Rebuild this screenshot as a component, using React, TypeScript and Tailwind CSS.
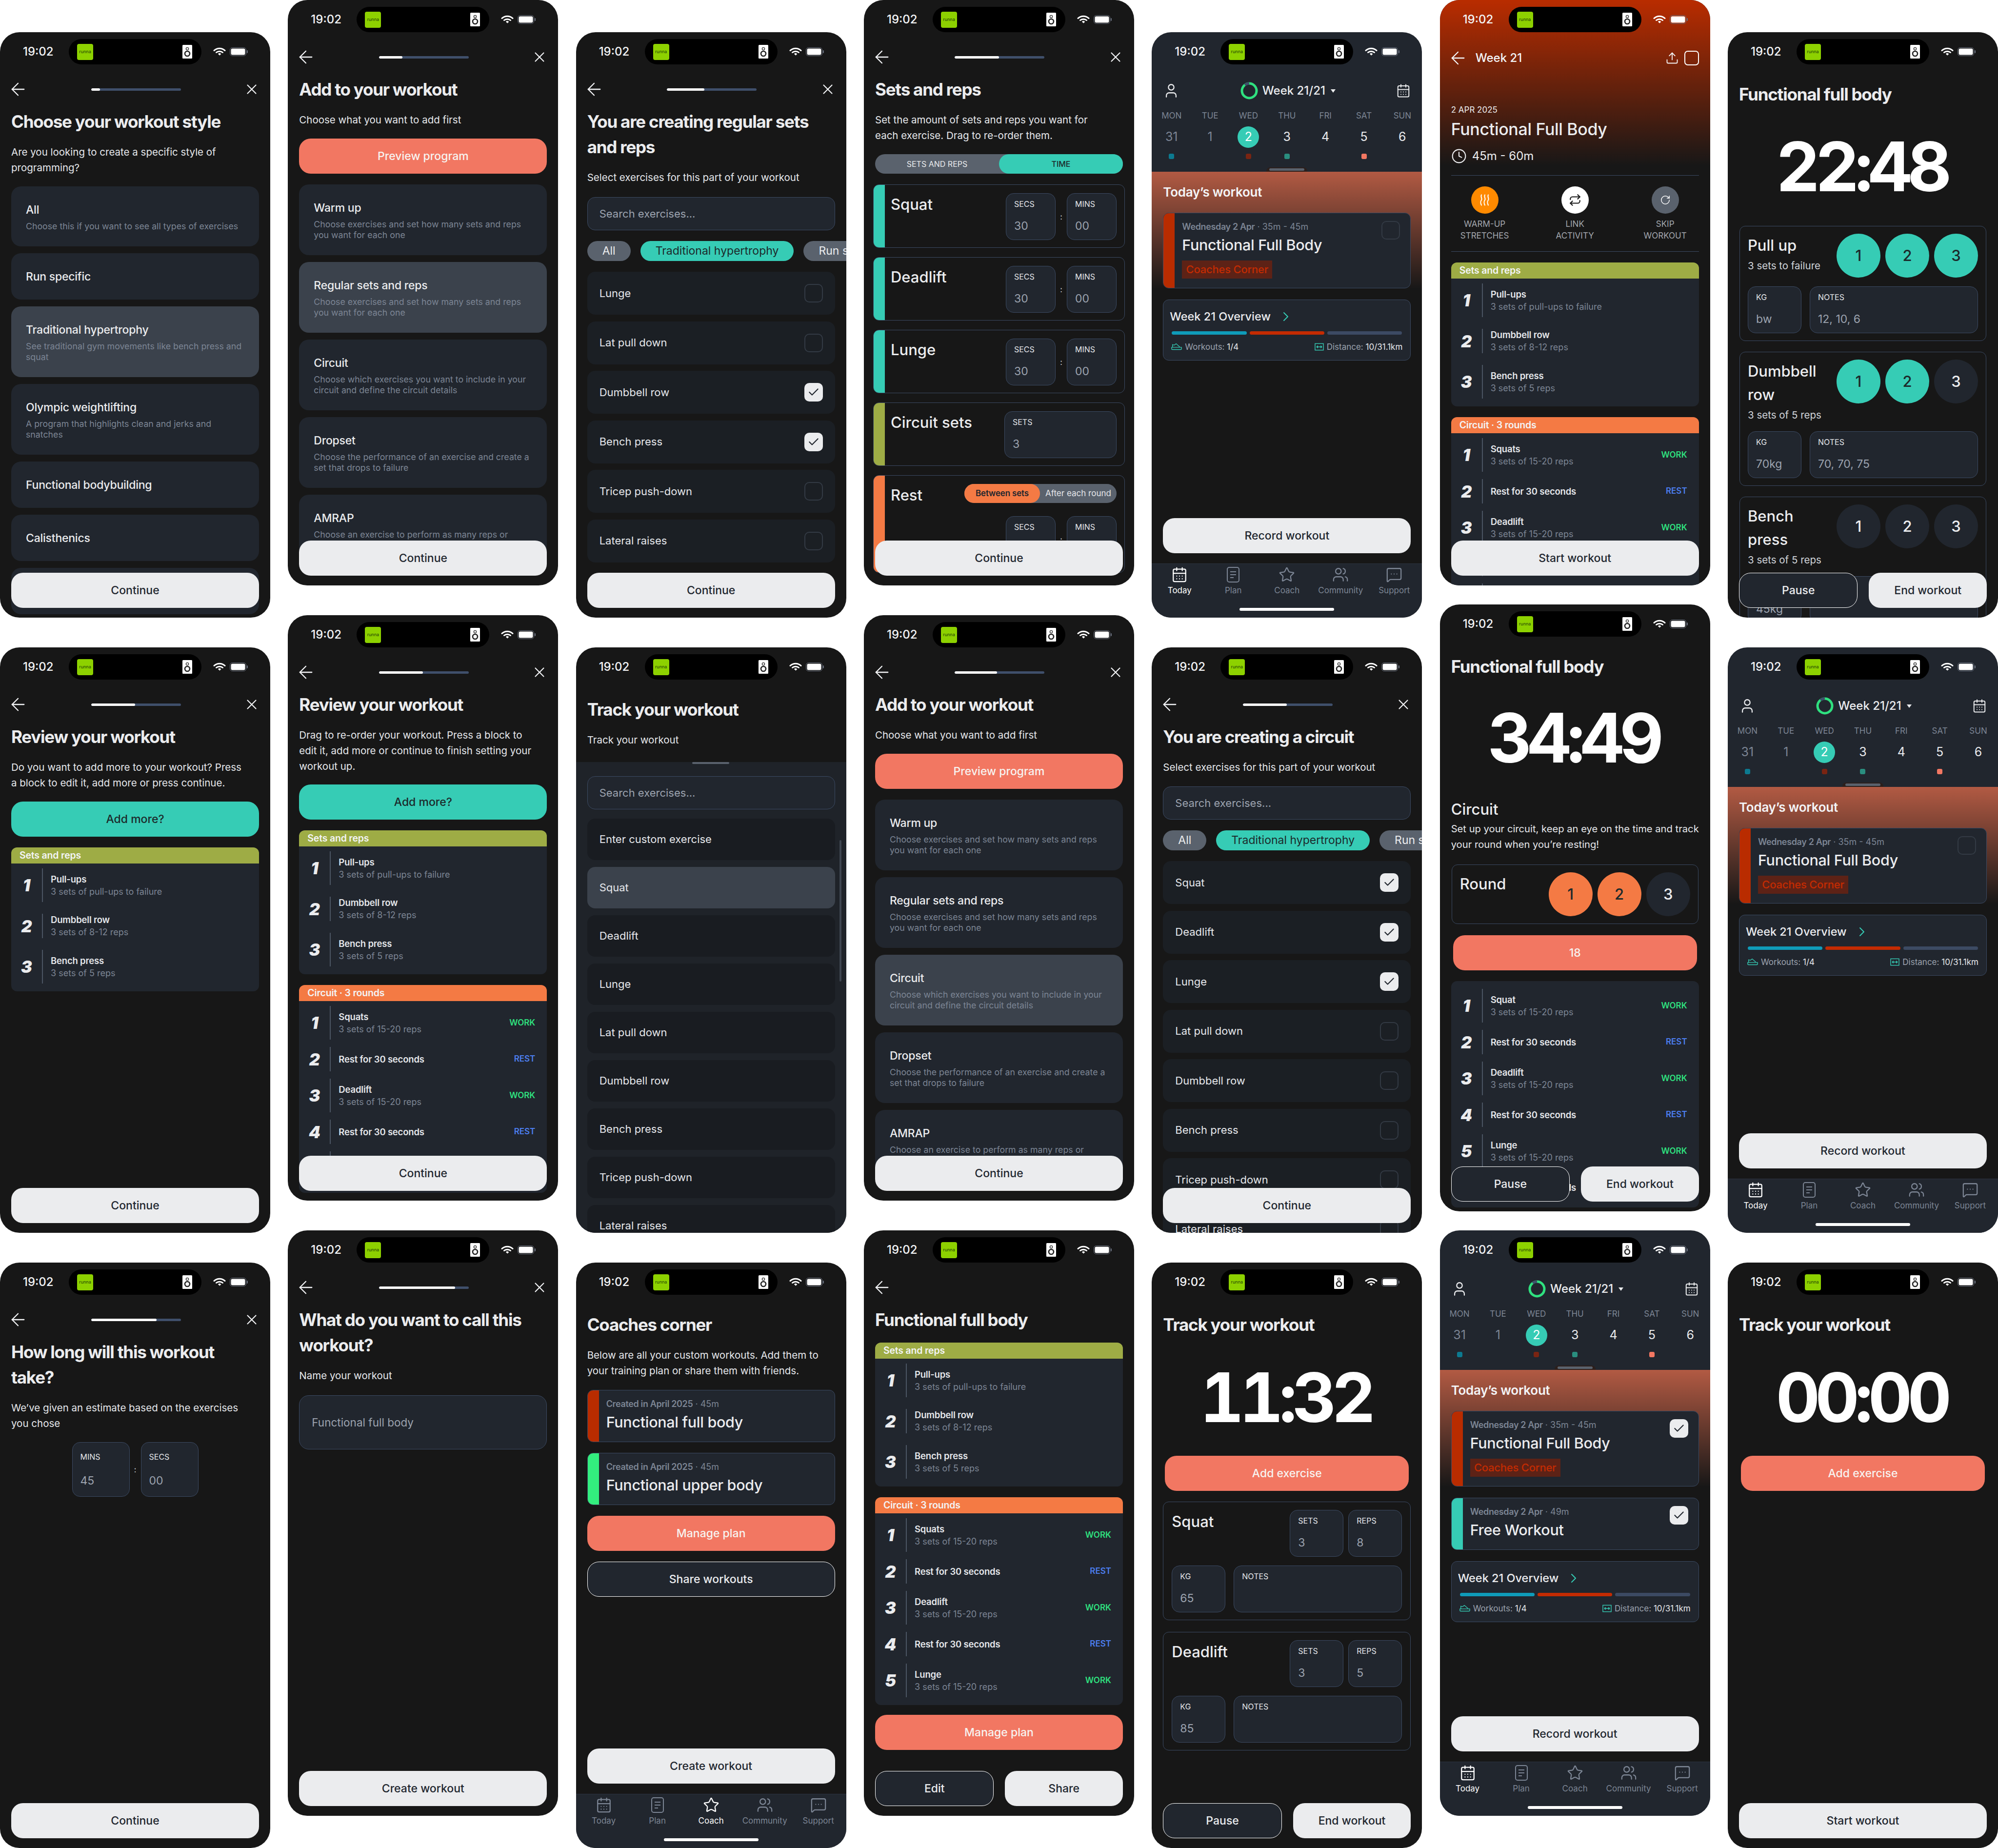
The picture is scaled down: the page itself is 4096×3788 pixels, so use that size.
import type { ReactNode } from "react";
import {
  ArrowLeft,
  Check,
  ChevronRight,
  Clock,
  MessageSquareMore,
  Repeat,
  RotateCw,
  Star,
  Upload,
  User,
  Users,
  X,
  CalendarDays,
} from "lucide-react";

const Phone = ({ dark, tall, children }: { dark?: boolean; tall?: boolean; children: ReactNode }) => (
  <div
    className={`relative flex w-[554px] flex-col overflow-hidden rounded-[40px] font-['Inter',sans-serif] ${
      tall ? "h-[1244px]" : "h-[1200px]"
    } ${dark ? "bg-[#21262e]" : "bg-[#171717]"}`}
  >
    {children}
  </div>
);

const WifiGlyph = () => (
  <svg viewBox="0 0 26 20" className="h-[20px] w-[26px]" fill="none" stroke="white" strokeWidth="3" strokeLinecap="round">
    <path d="M2 7.5C8 1.8 18 1.8 24 7.5" />
    <path d="M6.5 11.5C10 8.4 16 8.4 19.5 11.5" />
    <path d="M13 17l-2.6-2.6a3.8 3.8 0 0 1 5.2 0z" fill="white" strokeWidth="1" />
  </svg>
);

const BatteryGlyph = () => (
  <svg viewBox="0 0 38 18" className="h-[18px] w-[38px]">
    <rect x="0.5" y="0.5" width="33" height="17" rx="5" fill="none" stroke="#6b7280" />
    <rect x="2.5" y="2.5" width="29" height="13" rx="3" fill="white" />
    <rect x="35" y="6" width="2" height="6" rx="1" fill="#6b7280" />
  </svg>
);

const SpeakerGlyph = () => (
  <svg viewBox="0 0 20 28" className="h-[28px] w-[20px]">
    <rect width="20" height="28" rx="1.5" fill="white" />
    <circle cx="10" cy="8" r="2.6" fill="none" stroke="#333" strokeWidth="1.4" />
    <circle cx="10" cy="18" r="5" fill="none" stroke="#222" strokeWidth="2.6" />
  </svg>
);

const StatusBar = () => (
  <div className="mt-[14px] flex h-[52px] shrink-0 items-center">
    <div className="w-[141px] pl-[47px] text-[24px] font-medium text-[#f3f4f6]">19:02</div>
    <div className="flex h-[52px] w-[272px] items-center justify-between rounded-full bg-black pl-[17px] pr-[19px]">
      <div className="flex h-[33px] w-[33px] items-center justify-center rounded-[4px] bg-[#8dd100] text-[9px] text-[#1c3b05]">
        runna
      </div>
      <SpeakerGlyph />
    </div>
    <div className="ml-[24px] flex items-center gap-[8px]">
      <WifiGlyph />
      <BatteryGlyph />
    </div>
  </div>
);

const Nav = ({ progress }: { progress?: number }) => (
  <div className="mt-[37px] flex h-[28px] shrink-0 items-center justify-between pl-[16px] pr-[21px] text-[#f3f4f6]">
    <ArrowLeft size={42} strokeWidth={1.3} />
    {progress !== undefined && (
      <>
        <div className="h-[5px] w-[184px] overflow-hidden rounded-full bg-[#3f4f6b]">
          <div className="h-full rounded-full bg-white" style={{ width: `${progress}%` }} />
        </div>
        <X size={34} strokeWidth={1.5} />
      </>
    )}
  </div>
);

const Title = ({ children, className = "" }: { children: ReactNode; className?: string }) => (
  <h1 className={`px-[23px] text-[35px] leading-[52px] font-bold tracking-[-0.035em] text-[#ebecee] ${className}`}>
    {children}
  </h1>
);

const Sub = ({ children, className = "" }: { children: ReactNode; className?: string }) => (
  <p className={`mt-[21px] px-[23px] text-[20.5px] leading-[32px] whitespace-nowrap text-[#e5e7eb] ${className}`}>{children}</p>
);

const tones = {
  light: "bg-[#ebecee] text-[#21262e]",
  coral: "bg-[#f27762] text-[#f7f3f0]",
  teal: "bg-[#36ccb5] text-[#1c2a2b]",
  outline: "bg-[#21262e] border border-white text-[#ebecee]",
};

const Btn = ({
  tone = "light",
  className = "",
  children,
}: {
  tone?: keyof typeof tones;
  className?: string;
  children: ReactNode;
}) => (
  <div className={`flex h-[72px] items-center justify-center rounded-[24px] text-[23px] font-medium ${tones[tone]} ${className}`}>
    {children}
  </div>
);

const Foot = ({ children }: { children: ReactNode }) => (
  <div className="absolute inset-x-[23px] bottom-[20px] flex gap-[23px]">{children}</div>
);

const OptionCard = ({ title, desc, active }: { title?: string; desc?: string; active?: boolean }) => (
  <div
    className={`shrink-0 rounded-[20px] px-[30px] ${active ? "bg-[#3b424c]" : "bg-[#21262e]"} ${
      desc ? (desc.length > 53 ? "h-[145px] pt-[33px]" : "h-[123px] pt-[33px]") : "flex h-[95px] items-center"
    }`}
  >
    <div className="text-[23px] leading-[30px] font-medium tracking-[-0.01em] text-[#ebecee]">{title}</div>
    {desc && <div className="mt-[8px] text-[17.75px] leading-[22px] text-[#7c8594]">{desc}</div>}
  </div>
);

const addOptions = [
  { title: "Warm up", desc: "Choose exercises and set how many sets and reps you want for each one" },
  { title: "Regular sets and reps", desc: "Choose exercises and set how many sets and reps you want for each one" },
  { title: "Circuit", desc: "Choose which exercises you want to include in your circuit and define the circuit details" },
  { title: "Dropset", desc: "Choose the performance of an exercise and create a set that drops to failure" },
  { title: "AMRAP", desc: "Choose an exercise to perform as many reps or rounds as possible" },
];

const AddScreen = ({ active, progress }: { active: string; progress: number }) => (
  <Phone>
    <StatusBar />
    <Nav progress={progress} />
    <Title className="mt-[26px]">Add to your workout</Title>
    <Sub>Choose what you want to add first</Sub>
    <div className="mt-[22px] flex flex-col gap-[14px] px-[23px]">
      <Btn tone="coral" className="mb-[8px]">Preview program</Btn>
      {addOptions.map((o) => (
        <OptionCard key={o.title} {...o} active={o.title === active} />
      ))}
    </div>
    <Foot>
      <Btn className="flex-1">Continue</Btn>
    </Foot>
  </Phone>
);

const CheckBox = ({ on }: { on?: boolean }) =>
  on ? (
    <div className="flex h-[38px] w-[38px] items-center justify-center rounded-[10px] bg-[#ebecee] text-[#21262e]">
      <Check size={26} strokeWidth={2} />
    </div>
  ) : (
    <div className="h-[38px] w-[38px] rounded-[10px] border-[2px] border-[#333a44]" />
  );

const SearchBox = ({ className = "" }: { className?: string }) => (
  <div className={`mx-[23px] flex h-[68px] shrink-0 items-center rounded-[16px] border border-[#3b4a63] bg-[#21262e] px-[24px] text-[22px] text-[#9ca3af] ${className}`}>
    Search exercises...
  </div>
);

const Chips = () => (
  <div className="mt-[22px] flex h-[41px] shrink-0 gap-[20px] pl-[23px] text-[23px] whitespace-nowrap">
    <div className="flex items-center rounded-full bg-[#5a626d] px-[31px] text-[#ebecee]">All</div>
    <div className="flex items-center rounded-full bg-[#36ccb5] px-[31px] text-[#1c2a2b]">Traditional hypertrophy</div>
    <div className="flex items-center rounded-full bg-[#5a626d] px-[31px] text-[#ebecee]">Run specific</div>
  </div>
);

const PickList = ({ items }: { items: [string, boolean][] }) => (
  <div className="mt-[22px] flex flex-col gap-[13.5px] px-[23px]">
    {items.map(([name, on]) => (
      <div key={name} className="flex h-[88px] shrink-0 items-center justify-between rounded-[16px] bg-[#1b1f24] pl-[25px] pr-[25px] text-[22px] text-[#e5e7eb]">
        {name}
        <CheckBox on={on} />
      </div>
    ))}
  </div>
);

const Field = ({ label, value, big, className = "" }: { label: string; value?: string; big?: boolean; className?: string }) => (
  <div className={`shrink-0 rounded-[16px] border border-[#3b4a63] bg-[#21262e] px-[16px] ${big ? "h-[112px] pt-[19px]" : "h-[96px] pt-[11px]"} ${className}`}>
    <div className="text-[16px] leading-[20px] text-[#e5e7eb]">{label}</div>
    <div className={`text-[23px] leading-[30px] text-[#9ca3af] ${big ? "mt-[24px]" : "mt-[20px]"}`}>{value}</div>
  </div>
);

const Colon = () => <div className="flex w-[23px] items-center justify-center text-[16px] text-[#d1d5db]">:</div>;

const TimeRow = ({ name, bar, children, h = "h-[130px]" }: { name: string; bar: string; children: ReactNode; h?: string }) => (
  <div className={`flex shrink-0 overflow-hidden rounded-[12px] border border-[#3b4a63] ${h}`}>
    <div className={`w-[23px] shrink-0 ${bar}`} />
    <div className="flex flex-1 pl-[12px] pr-[16px] pt-[17px]">
      <div className="flex-1 text-[31px] leading-[46px] font-medium text-[#ebecee]">{name}</div>
      <div className="flex flex-col items-end">{children}</div>
    </div>
  </div>
);

const SecsMins = () => (
  <div className="flex">
    <Field label="SECS" value="30" className="w-[102px]" />
    <Colon />
    <Field label="MINS" value="00" className="w-[102px]" />
  </div>
);

type Row = { n: number; title: string; sub?: string; tag?: "WORK" | "REST"; short?: boolean };

const setRows: Row[] = [
  { n: 1, title: "Pull-ups", sub: "3 sets of pull-ups to failure" },
  { n: 2, title: "Dumbbell row", sub: "3 sets of 8-12 reps", short: true },
  { n: 3, title: "Bench press", sub: "3 sets of 5 reps" },
];

const circuitRows: Row[] = [
  { n: 1, title: "Squats", sub: "3 sets of 15-20 reps", tag: "WORK" },
  { n: 2, title: "Rest for 30 seconds", tag: "REST", short: true },
  { n: 3, title: "Deadlift", sub: "3 sets of 15-20 reps", tag: "WORK" },
  { n: 4, title: "Rest for 30 seconds", tag: "REST", short: true },
  { n: 5, title: "Lunge", sub: "3 sets of 15-20 reps", tag: "WORK" },
];

const BlockRow = ({ n, title, sub, tag, short }: Row) => (
  <div className={`flex shrink-0 items-center ${short ? "h-[50px]" : "h-[69px]"}`}>
    <div className="w-[63px] text-center text-[34px] font-black italic text-[#ebecee]">{n}</div>
    <div className="h-full w-[2px] bg-[#4b5563]" />
    <div className="ml-[16px] flex-1">
      <div className="text-[18.5px] leading-[26px] font-semibold tracking-[-0.01em] text-[#e5e7eb] whitespace-nowrap">{title}</div>
      {sub && <div className="text-[18px] leading-[26px] text-[#7c8594] whitespace-nowrap">{sub}</div>}
    </div>
    {tag && (
      <div className={`mr-[24px] text-[17px] font-semibold ${tag === "WORK" ? "text-[#2fe07f]" : "text-[#4c7ef0]"}`}>{tag}</div>
    )}
  </div>
);

const Block = ({
  label,
  head,
  rows,
  gap,
  className = "",
}: {
  label?: string;
  head?: string;
  rows: Row[];
  gap: string;
  className?: string;
}) => (
  <div className={`mx-[23px] shrink-0 overflow-hidden rounded-[12px] bg-[#21262e] ${className}`}>
    {label && <div className={`flex h-[33px] items-center px-[17px] text-[19.5px] font-semibold tracking-[-0.01em] text-[#f3f4f6] ${head}`}>{label}</div>}
    <div className={`flex flex-col pb-[16px] ${label ? "pt-[10px]" : "pt-[16px]"} ${gap}`}>
      {rows.map((r) => (
        <BlockRow key={r.n} {...r} />
      ))}
    </div>
  </div>
);

const SetsBlock = ({ className }: { className?: string }) => (
  <Block label="Sets and reps" head="bg-[#9eac45]" rows={setRows} gap="gap-[24px]" className={className} />
);

const CircuitBlock = ({ rows = circuitRows, className }: { rows?: Row[]; className?: string }) => (
  <Block label="Circuit · 3 rounds" head="bg-[#f47a44]" rows={rows} gap="gap-[15px]" className={className} />
);

const Timer = ({ children, className = "" }: { children: ReactNode; className?: string }) => (
  <div className={`pr-[6px] text-center text-[140px] leading-[140px] font-bold tracking-[-0.07em] tabular-nums text-white ${className}`}>{children}</div>
);

const Bubble = ({ n, tone = "bg-[#21262e] text-[#ebecee]" }: { n: number; tone?: string }) => (
  <div className={`flex h-[90px] w-[90px] items-center justify-center rounded-full text-[31px] font-medium ${tone}`}>{n}</div>
);

const Bubbles = ({ done, on }: { done: number; on: string }) => (
  <div className="flex shrink-0 gap-[10px]">
    {[1, 2, 3].map((n) => (
      <Bubble key={n} n={n} tone={n <= done ? on : undefined} />
    ))}
  </div>
);

const TrackCard = ({
  name,
  sub,
  done,
  kg,
  notes,
}: {
  name: string;
  sub: string;
  done: number;
  kg: string;
  notes?: string;
}) => (
  <div className="mx-[24px] mb-[22px] shrink-0 rounded-[12px] border border-[#3b4a63] px-[16px] pb-[15px] pt-[15px]">
    <div className="flex">
      <div className="flex-1">
        <div className="text-[31px] leading-[48px] font-medium text-[#ebecee]">{name}</div>
        <div className="mt-[3px] text-[20.5px] leading-[30px] text-[#d1d5db]">{sub}</div>
      </div>
      <Bubbles done={done} on="bg-[#36ccb5] text-[#1c2a2b]" />
    </div>
    <div className="mt-[18px] flex gap-[17px]">
      <Field label="KG" value={kg} className="w-[110px]" />
      <Field label="NOTES" value={notes} className="flex-1" />
    </div>
  </div>
);

const Tabs = ({ active }: { active: string }) => {
  const items: [string, ReactNode][] = [
    ["Today", <CalendarDays size={34} strokeWidth={1.6} />],
    [
      "Plan",
      <svg viewBox="0 0 28 34" className="h-[34px] w-[28px]" fill="none" stroke="currentColor" strokeWidth="2">
        <rect x="2" y="2" width="24" height="30" rx="4" />
        <path d="M8 11h12M8 17h12M8 23h7" />
      </svg>,
    ],
    ["Coach", <Star size={34} strokeWidth={1.6} />],
    ["Community", <Users size={34} strokeWidth={1.6} />],
    ["Support", <MessageSquareMore size={34} strokeWidth={1.6} />],
  ];
  return (
    <div className="relative h-[111px] shrink-0 border-t border-[#2b3340] bg-[#21262e]">
      <div className="grid grid-cols-5 px-[2px] pt-[5px]">
        {items.map(([label, icon]) => (
          <div key={label} className={`flex flex-col items-center gap-[3px] ${label === active ? "text-white" : "text-[#7c8594]"}`}>
            {icon}
            <div className="text-[17px] leading-[24px]">{label}</div>
          </div>
        ))}
      </div>
      <div className="absolute bottom-[14px] left-[180px] h-[6px] w-[194px] rounded-full bg-white" />
    </div>
  );
};

const days: [string, string, string][] = [
  ["MON", "31", "bg-[#0c7a90]"],
  ["TUE", "1", ""],
  ["WED", "2", "bg-[#7a2412]"],
  ["THU", "3", "bg-[#2a8e7f]"],
  ["FRI", "4", ""],
  ["SAT", "5", "bg-[#f27762]"],
  ["SUN", "6", ""],
];

const WeekHead = () => (
  <div className="relative h-[220px] shrink-0 bg-[#21262e] pt-[37px]">
    <div className="flex h-[34px] items-center justify-between px-[23px] text-[#ebecee]">
      <User size={34} strokeWidth={1.6} />
      <div className="flex items-center gap-[9px]">
        <svg viewBox="0 0 36 36" className="h-[36px] w-[36px]" fill="none" strokeWidth="5">
          <circle cx="18" cy="18" r="15" stroke="#2fe07f" />
          <path d="M9 6A15 15 0 0 1 18 3" stroke="#3f4f6b" />
        </svg>
        <span className="text-[24px] font-medium">Week 21/21</span>
        <span className="ml-[2px] h-0 w-0 border-x-[5px] border-t-[7px] border-x-transparent border-t-[#ebecee]" />
      </div>
      <CalendarDays size={30} strokeWidth={1.6} />
    </div>
    <div className="mt-[23px] grid grid-cols-7 px-[1px]">
      {days.map(([d, n, dot], i) => (
        <div key={d} className="flex flex-col items-center">
          <div className="text-[17px] leading-[22px] text-[#7c8594]">{d}</div>
          <div
            className={`mt-[11px] flex h-[44px] w-[44px] items-center justify-center rounded-full text-[25px] ${
              i === 2 ? "bg-[#36ccb5] text-white" : i < 2 ? "text-[#7c8594]" : "text-[#ebecee]"
            }`}
          >
            {n}
          </div>
          <div className={`mt-[12px] h-[11px] w-[11px] rounded-[3px] ${dot}`} />
        </div>
      ))}
    </div>
    <div className="absolute bottom-0 left-[235px] flex h-[9px] w-[84px] items-start justify-center rounded-t-[8px] bg-[#2c1f1c] pt-[2px]">
      <div className="h-[5px] w-[72px] rounded-full bg-[#5a626d]" />
    </div>
  </div>
);

const WorkoutCard = ({
  meta,
  metaEnd,
  name,
  bar,
  tag,
  done,
  check,
}: {
  meta: string;
  metaEnd: string;
  name: string;
  bar: string;
  tag?: boolean;
  done?: boolean;
  check?: boolean;
}) => (
  <div className={`flex shrink-0 overflow-hidden rounded-[12px] border border-[#3b4a63] bg-[#21262e] ${tag ? "h-[155px]" : "h-[107px]"}`}>
    <div className={`w-[23px] shrink-0 ${bar}`} />
    <div className="flex-1 pl-[15px] pt-[14px]">
      <div className="text-[18px] leading-[28px] text-[#7c8594]">
        <span className="font-semibold tracking-[-0.02em]">{meta}</span> · {metaEnd}
      </div>
      <div className="mt-[4px] text-[30.5px] leading-[38px] font-medium tracking-[-0.01em] text-[#ebecee]">{name}</div>
      {tag && (
        <div className="mt-[13px] flex h-[37px] w-[185px] items-center justify-center bg-[#5d2216] text-[22px] font-medium tracking-[-0.01em] whitespace-nowrap text-[#c42b02]">
          Coaches Corner
        </div>
      )}
    </div>
    {check && (
      <div className="pr-[21px] pt-[16px]">
        <CheckBox on={done} />
      </div>
    )}
  </div>
);

const Overview = () => (
  <div className="h-[125px] shrink-0 rounded-[12px] border border-[#3b4a63] bg-[#21262e] px-[13px] pt-[17px]">
    <div className="flex h-[34px] items-center text-[23.5px] font-medium text-[#ebecee]">
      Week 21 Overview
      <ChevronRight size={32} strokeWidth={1.5} className="ml-[15px] text-[#36ccb5]" />
    </div>
    <div className="mt-[13px] flex gap-[6px] px-[4px]">
      <div className="h-[7px] flex-1 rounded-full bg-[#0f9bb9]" />
      <div className="h-[7px] flex-1 rounded-full bg-[#c42b02]" />
      <div className="h-[7px] flex-1 rounded-full bg-[#3c4a63]" />
    </div>
    <div className="mt-[13px] flex justify-between px-[3px] text-[17px] leading-[24px] text-[#9ca3af]">
      <div className="flex items-center gap-[6px]">
        <svg viewBox="0 0 24 16" className="h-[16px] w-[22px]" fill="none" stroke="#36ccb5" strokeWidth="1.5">
          <path d="M1 9h22v3a2 2 0 0 1-2 2H3a2 2 0 0 1-2-2zM3 9V3l4 1 4-3 8 7" />
        </svg>
        <span>
          Workouts: <span className="text-[#e5e7eb]">1/4</span>
        </span>
      </div>
      <div className="flex items-center gap-[6px]">
        <svg viewBox="0 0 20 16" className="h-[16px] w-[19px]" fill="none" stroke="#36ccb5" strokeWidth="1.5">
          <rect x="1" y="1" width="18" height="14" />
          <path d="M5 8h10M7 5.5 4.5 8 7 10.5M13 5.5 15.5 8 13 10.5" />
        </svg>
        <span>
          Distance: <span className="text-[#e5e7eb]">10/31.1km</span>
        </span>
      </div>
    </div>
  </div>
);

const TodayScreen = ({ two }: { two?: boolean }) => (
  <Phone dark>
    <div className="h-[66px] shrink-0">
      <StatusBar />
    </div>
    <WeekHead />
    <div className="flex flex-1 flex-col bg-[linear-gradient(180deg,#b25a43_0,#171717_240px)] px-[23px]">
      <div className="mt-[24px] text-[26px] leading-[36px] font-semibold tracking-[-0.01em] text-[#f3f4f6]">Today’s workout</div>
      <div className="mt-[24px] flex flex-1 flex-col gap-[23px]">
        <WorkoutCard meta="Wednesday 2 Apr" metaEnd="35m - 45m" name="Functional Full Body" bar="bg-[#b92c00]" tag check done={two} />
        {two && <WorkoutCard meta="Wednesday 2 Apr" metaEnd="49m" name="Free Workout" bar="bg-[#36ccb5]" check done />}
        <Overview />
      </div>
      <Btn className="mb-[21px]">Record workout</Btn>
    </div>
    <Tabs active="Today" />
  </Phone>
);

const regularPicks: [string, boolean][] = [
  ["Lunge", false],
  ["Lat pull down", false],
  ["Dumbbell row", true],
  ["Bench press", true],
  ["Tricep push-down", false],
  ["Lateral raises", false],
];

const circuitPicks: [string, boolean][] = [
  ["Squat", true],
  ["Deadlift", true],
  ["Lunge", true],
  ["Lat pull down", false],
  ["Dumbbell row", false],
  ["Bench press", false],
  ["Tricep push-down", false],
  ["Lateral raises", false],
];

const trackItems = [
  "Enter custom exercise",
  "Squat",
  "Deadlift",
  "Lunge",
  "Lat pull down",
  "Dumbbell row",
  "Bench press",
  "Tricep push-down",
  "Lateral raises",
];

const SessionCard = ({ name, reps, kg }: { name: string; reps: string; kg: string }) => (
  <div className="mx-[23px] mb-[24px] h-[243px] shrink-0 rounded-[12px] border border-[#3b4a63] px-[17px] pt-[16px]">
    <div className="flex">
      <div className="flex-1 text-[31px] leading-[48px] font-medium text-[#ebecee]">{name}</div>
      <div className="flex gap-[10px]">
        <Field label="SETS" value="3" className="w-[110px]" />
        <Field label="REPS" value={reps} className="w-[110px]" />
      </div>
    </div>
    <div className="mt-[18px] flex gap-[17px]">
      <Field label="KG" value={kg} className="w-[110px]" />
      <Field label="NOTES" className="flex-1" />
    </div>
  </div>
);

const QuickAction = ({ tone, icon, label, sub }: { tone: string; icon: ReactNode; label: string; sub: string }) => (
  <div className="flex w-[138px] flex-col items-center">
    <div className={`mb-[9px] flex h-[56px] w-[56px] items-center justify-center rounded-full ${tone}`}>{icon}</div>
    {label}
    <br />
    {sub}
  </div>
);

const Column = ({ offset, gap = "gap-[61px]", children }: { offset?: boolean; gap?: string; children: ReactNode }) => (
  <div className={`flex flex-col ${gap} ${offset ? "pt-[66px]" : ""}`}>{children}</div>
);

export default function App() {
  return (
    <div className="flex h-[3788px] w-[4096px] justify-between bg-white">
      <Column offset>
        <Phone>
          <StatusBar />
          <Nav progress={10} />
          <Title className="mt-[26px]">Choose your workout style</Title>
          <Sub>
            Are you looking to create a specific style of
            <br />
            programming?
          </Sub>
          <div className="mt-[22px] flex flex-col gap-[14px] px-[23px]">
            <OptionCard title="All" desc="Choose this if you want to see all types of exercises" />
            <OptionCard title="Run specific" />
            <OptionCard title="Traditional hypertrophy" desc="See traditional gym movements like bench press and squat" active />
            <OptionCard title="Olympic weightlifting" desc="A program that highlights clean and jerks and snatches" />
            <OptionCard title="Functional bodybuilding" />
            <OptionCard title="Calisthenics" />
            <OptionCard />
          </div>
          <Foot>
            <Btn className="flex-1">Continue</Btn>
          </Foot>
        </Phone>
        <Phone>
          <StatusBar />
          <Nav progress={49} />
          <Title className="mt-[26px]">Review your workout</Title>
          <Sub>
            Do you want to add more to your workout? Press
            <br />a block to edit it, add more or press continue.
          </Sub>
          <div className="mx-[23px] mt-[22px]">
            <Btn tone="teal">Add more?</Btn>
          </div>
          <SetsBlock className="mt-[22px]" />
          <Foot>
            <Btn className="flex-1">Continue</Btn>
          </Foot>
        </Phone>
        <Phone>
          <StatusBar />
          <Nav progress={73} />
          <Title className="mt-[26px]">
            How long will this workout
            <br />
            take?
          </Title>
          <Sub>
            We’ve given an estimate based on the exercises
            <br />
            you chose
          </Sub>
          <div className="mt-[22px] flex justify-center">
            <Field label="MINS" value="45" big className="w-[118px]" />
            <Colon />
            <Field label="SECS" value="00" big className="w-[118px]" />
          </div>
          <Foot>
            <Btn className="flex-1">Continue</Btn>
          </Foot>
        </Phone>
      </Column>

      <Column>
        <AddScreen active="Regular sets and reps" progress={26} />
        <Phone>
          <StatusBar />
          <Nav progress={49} />
          <Title className="mt-[26px]">Review your workout</Title>
          <Sub>
            Drag to re-order your workout. Press a block to
            <br />
            edit it, add more or continue to finish setting your
            <br />
            workout up.
          </Sub>
          <div className="mx-[23px] mt-[21px]">
            <Btn tone="teal">Add more?</Btn>
          </div>
          <SetsBlock className="mt-[22px]" />
          <CircuitBlock className="mt-[22px]" />
          <Foot>
            <Btn className="flex-1">Continue</Btn>
          </Foot>
        </Phone>
        <Phone>
          <StatusBar />
          <Nav progress={85} />
          <Title className="mt-[26px]">
            What do you want to call this
            <br />
            workout?
          </Title>
          <Sub>Name your workout</Sub>
          <div className="mx-[23px] mt-[24px] flex h-[111px] items-center rounded-[20px] border border-[#3b4a63] bg-[#21262e] px-[25px] text-[22.5px] text-[#9ca3af]">
            Functional full body
          </div>
          <Foot>
            <Btn className="flex-1">Create workout</Btn>
          </Foot>
        </Phone>
      </Column>

      <Column offset>
        <Phone>
          <StatusBar />
          <Nav progress={42} />
          <Title className="mt-[26px]">
            You are creating regular sets
            <br />
            and reps
          </Title>
          <Sub>Select exercises for this part of your workout</Sub>
          <SearchBox className="mt-[24px]" />
          <Chips />
          <PickList items={regularPicks} />
          <Foot>
            <Btn className="flex-1">Continue</Btn>
          </Foot>
        </Phone>
        <Phone>
          <StatusBar />
          <Title className="mt-[35px]">Track your workout</Title>
          <Sub>Track your workout</Sub>
          <div className="relative mt-[29px] flex flex-1 flex-col bg-[#1f2329] pt-[29px]">
            <div className="absolute left-[238px] top-0 h-[4px] w-[76px] rounded-full bg-[#5a626d]" />
            <SearchBox />
            <div className="mt-[19px] flex flex-col gap-[14px] px-[23px]">
              {trackItems.map((t) => (
                <div
                  key={t}
                  className={`flex h-[85px] shrink-0 items-center rounded-[16px] px-[25px] text-[22px] text-[#e5e7eb] ${
                    t === "Squat" ? "bg-[#3b424c]" : "bg-[#191c21]"
                  }`}
                >
                  {t}
                </div>
              ))}
            </div>
            <div className="absolute right-[10px] top-[160px] h-[290px] w-[4px] rounded-full bg-[#3f4650]" />
          </div>
        </Phone>
        <Phone>
          <StatusBar />
          <Title className="mt-[35px]">Coaches corner</Title>
          <Sub>
            Below are all your custom workouts. Add them to
            <br />
            your training plan or share them with friends.
          </Sub>
          <div className="mt-[23px] flex flex-1 flex-col gap-[22px] px-[23px]">
            <WorkoutCard meta="Created in April 2025" metaEnd="45m" name="Functional full body" bar="bg-[#b92c00]" />
            <WorkoutCard meta="Created in April 2025" metaEnd="45m" name="Functional upper body" bar="bg-[#33ee7e]" />
            <Btn tone="coral">Manage plan</Btn>
            <Btn tone="outline">Share workouts</Btn>
            <Btn className="mb-[21px] mt-auto">Create workout</Btn>
          </div>
          <Tabs active="Coach" />
        </Phone>
      </Column>

      <Column>
        <Phone>
          <StatusBar />
          <Nav progress={49} />
          <Title className="mt-[26px]">Sets and reps</Title>
          <Sub>
            Set the amount of sets and reps you want for
            <br />
            each exercise. Drag to re-order them.
          </Sub>
          <div className="mx-[23px] mt-[22px] flex h-[40px] shrink-0 rounded-full bg-[#5a626d] text-[16px] uppercase">
            <div className="flex flex-1 items-center justify-center text-[#ebecee]">Sets and reps</div>
            <div className="flex flex-1 items-center justify-center rounded-full bg-[#36ccb5] font-medium text-[#1c2a2b]">Time</div>
          </div>
          <div className="mt-[22px] flex flex-col gap-[19px] px-[19px]">
            <TimeRow name="Squat" bar="bg-[#36ccb5]"><SecsMins /></TimeRow>
            <TimeRow name="Deadlift" bar="bg-[#36ccb5]"><SecsMins /></TimeRow>
            <TimeRow name="Lunge" bar="bg-[#36ccb5]"><SecsMins /></TimeRow>
            <TimeRow name="Circuit sets" bar="bg-[#9eac45]">
              <Field label="SETS" value="3" className="w-[230px]" />
            </TimeRow>
            <TimeRow name="Rest" bar="bg-[#f47a44]" h="h-[200px]">
              <div className="flex h-[39px] w-[312px] rounded-full bg-[#5a626d] text-[17px]">
                <div className="flex w-[155px] items-center justify-center rounded-full bg-[#f47a44] font-semibold tracking-[-0.01em] text-[#21262e]">Between sets</div>
                <div className="flex flex-1 items-center justify-center text-[#e5e7eb]">After each round</div>
              </div>
              <div className="mt-[27px]">
                <SecsMins />
              </div>
            </TimeRow>
          </div>
          <Foot>
            <Btn className="flex-1">Continue</Btn>
          </Foot>
        </Phone>
        <AddScreen active="Circuit" progress={47} />
        <Phone>
          <StatusBar />
          <Nav />
          <Title className="mt-[26px]">Functional full body</Title>
          <SetsBlock className="mt-[21px]" />
          <CircuitBlock className="mt-[22px]" />
          <div className="mx-[23px] mt-[20px]">
            <Btn tone="coral">Manage plan</Btn>
          </div>
          <Foot>
            <Btn tone="outline" className="flex-1">Edit</Btn>
            <Btn className="flex-1">Share</Btn>
          </Foot>
        </Phone>
      </Column>

      <Column offset>
        <TodayScreen />
        <Phone>
          <StatusBar />
          <Nav progress={49} />
          <Title className="mt-[26px]">You are creating a circuit</Title>
          <Sub>Select exercises for this part of your workout</Sub>
          <SearchBox className="mt-[23px]" />
          <Chips />
          <PickList items={circuitPicks} />
          <Foot>
            <Btn className="flex-1">Continue</Btn>
          </Foot>
        </Phone>
        <Phone>
          <StatusBar />
          <Title className="mt-[35px]">Track your workout</Title>
          <Timer className="mt-[53px]">11:32</Timer>
          <div className="mx-[27px] mt-[50px]">
            <Btn tone="coral">Add exercise</Btn>
          </div>
          <div className="mt-[22px] flex flex-col">
            <SessionCard name="Squat" reps="8" kg="65" />
            <SessionCard name="Deadlift" reps="5" kg="85" />
          </div>
          <Foot>
            <Btn tone="outline" className="flex-1">Pause</Btn>
            <Btn className="flex-1">End workout</Btn>
          </Foot>
        </Phone>
      </Column>

      <Column gap="gap-[39px]">
        <Phone>
          <div className="absolute inset-x-0 top-0 h-[340px] bg-[linear-gradient(180deg,#b92c00_0,#171717_100%)]" />
          <div className="relative flex flex-1 flex-col">
            <StatusBar />
            <div className="mt-[37px] flex h-[32px] items-center pl-[16px] pr-[23px] text-[#f3f4f6]">
              <ArrowLeft size={42} strokeWidth={1.3} />
              <span className="ml-[15px] flex-1 text-[24px] font-medium">Week 21</span>
              <Upload size={28} strokeWidth={1.6} className="mr-[11px]" />
              <div className="h-[30px] w-[30px] rounded-[7px] border-[2px] border-white" />
            </div>
            <div className="mt-[78px] px-[23px] text-[17px] leading-[24px] text-[#ebecee]">2 APR 2025</div>
            <div className="mt-[4px] px-[23px] text-[34px] leading-[48px] font-medium tracking-[-0.01em] text-[#ebecee]">Functional Full Body</div>
            <div className="mt-[13px] flex items-center gap-[11px] px-[23px] text-[24px] text-[#ebecee]">
              <Clock size={32} strokeWidth={1.6} />
              45m - 60m
            </div>
            <div className="mx-[23px] mt-[21px] flex justify-between border-y border-[#3b4a63] pb-[20px] pt-[22px] text-center text-[17px] leading-[24px] text-[#a3a7ae]">
              <QuickAction
                tone="bg-[#ff8a00] text-white"
                label="WARM-UP"
                sub="STRETCHES"
                icon={
                  <svg viewBox="0 0 24 24" className="h-[28px] w-[28px]" fill="none" stroke="currentColor" strokeWidth="1.8" strokeLinecap="round">
                    <path d="M6 3c-2 4 2 6 0 9s-2 5 0 9M12 3c-2 4 2 6 0 9s-2 5 0 9M18 3c-2 4 2 6 0 9s-2 5 0 9" />
                  </svg>
                }
              />
              <QuickAction tone="bg-white text-[#171717]" label="LINK" sub="ACTIVITY" icon={<Repeat size={26} strokeWidth={2} />} />
              <QuickAction tone="bg-[#5a626d] text-white" label="SKIP" sub="WORKOUT" icon={<RotateCw size={22} strokeWidth={1.6} />} />
            </div>
            <SetsBlock className="mt-[22px]" />
            <CircuitBlock className="mt-[22px]" />
          </div>
          <Foot>
            <Btn className="flex-1">Start workout</Btn>
          </Foot>
        </Phone>
        <Phone tall>
          <StatusBar />
          <Title className="mt-[35px]">Functional full body</Title>
          <Timer className="mt-[50px]">34:49</Timer>
          <div className="mt-[55px] px-[23px] text-[31px] leading-[44px] font-medium text-[#ebecee]">Circuit</div>
          <p className="px-[23px] pt-[2px] text-[20.2px] leading-[32px] whitespace-nowrap text-[#e5e7eb]">
            Set up your circuit, keep an eye on the time and track
            <br />
            your round when you’re resting!
          </p>
          <div className="mx-[24px] mt-[25px] flex h-[122px] shrink-0 rounded-[12px] border border-[#3b4a63] px-[16px] pt-[15px]">
            <div className="flex-1 text-[31px] leading-[48px] font-medium text-[#ebecee]">Round</div>
            <Bubbles done={2} on="bg-[#f47a44] text-[#1c2a2b]" />
          </div>
          <div className="mx-[27px] mt-[23px]">
            <Btn tone="coral">18</Btn>
          </div>
          <Block
            rows={[
              { n: 1, title: "Squat", sub: "3 sets of 15-20 reps", tag: "WORK" },
              { n: 2, title: "Rest for 30 seconds", tag: "REST", short: true },
              { n: 3, title: "Deadlift", sub: "3 sets of 15-20 reps", tag: "WORK" },
              { n: 4, title: "Rest for 30 seconds", tag: "REST", short: true },
              { n: 5, title: "Lunge", sub: "3 sets of 15-20 reps", tag: "WORK" },
              { n: 6, title: "Rest for 30 seconds", tag: "REST", short: true },
            ]}
            gap="gap-[15px]"
            className="mt-[22px]"
          />
          <Foot>
            <Btn tone="outline" className="flex-1">Pause</Btn>
            <Btn className="flex-1">End workout</Btn>
          </Foot>
        </Phone>
        <TodayScreen two />
      </Column>

      <Column offset>
        <Phone>
          <StatusBar />
          <Title className="mt-[35px]">Functional full body</Title>
          <Timer className="mt-[52px]">22:48</Timer>
          <div className="mt-[52px] flex flex-col">
            <TrackCard name="Pull up" sub="3 sets to failure" done={3} kg="bw" notes="12, 10, 6" />
            <TrackCard name="Dumbbell row" sub="3 sets of 5 reps" done={2} kg="70kg" notes="70, 70, 75" />
            <TrackCard name="Bench press" sub="3 sets of 5 reps" done={0} kg="45kg" />
          </div>
          <Foot>
            <Btn tone="outline" className="flex-1">Pause</Btn>
            <Btn className="flex-1">End workout</Btn>
          </Foot>
        </Phone>
        <TodayScreen />
        <Phone>
          <StatusBar />
          <Title className="mt-[35px]">Track your workout</Title>
          <Timer className="mt-[53px]">00:00</Timer>
          <div className="mx-[27px] mt-[50px]">
            <Btn tone="coral">Add exercise</Btn>
          </div>
          <Foot>
            <Btn className="flex-1">Start workout</Btn>
          </Foot>
        </Phone>
      </Column>
    </div>
  );
}
